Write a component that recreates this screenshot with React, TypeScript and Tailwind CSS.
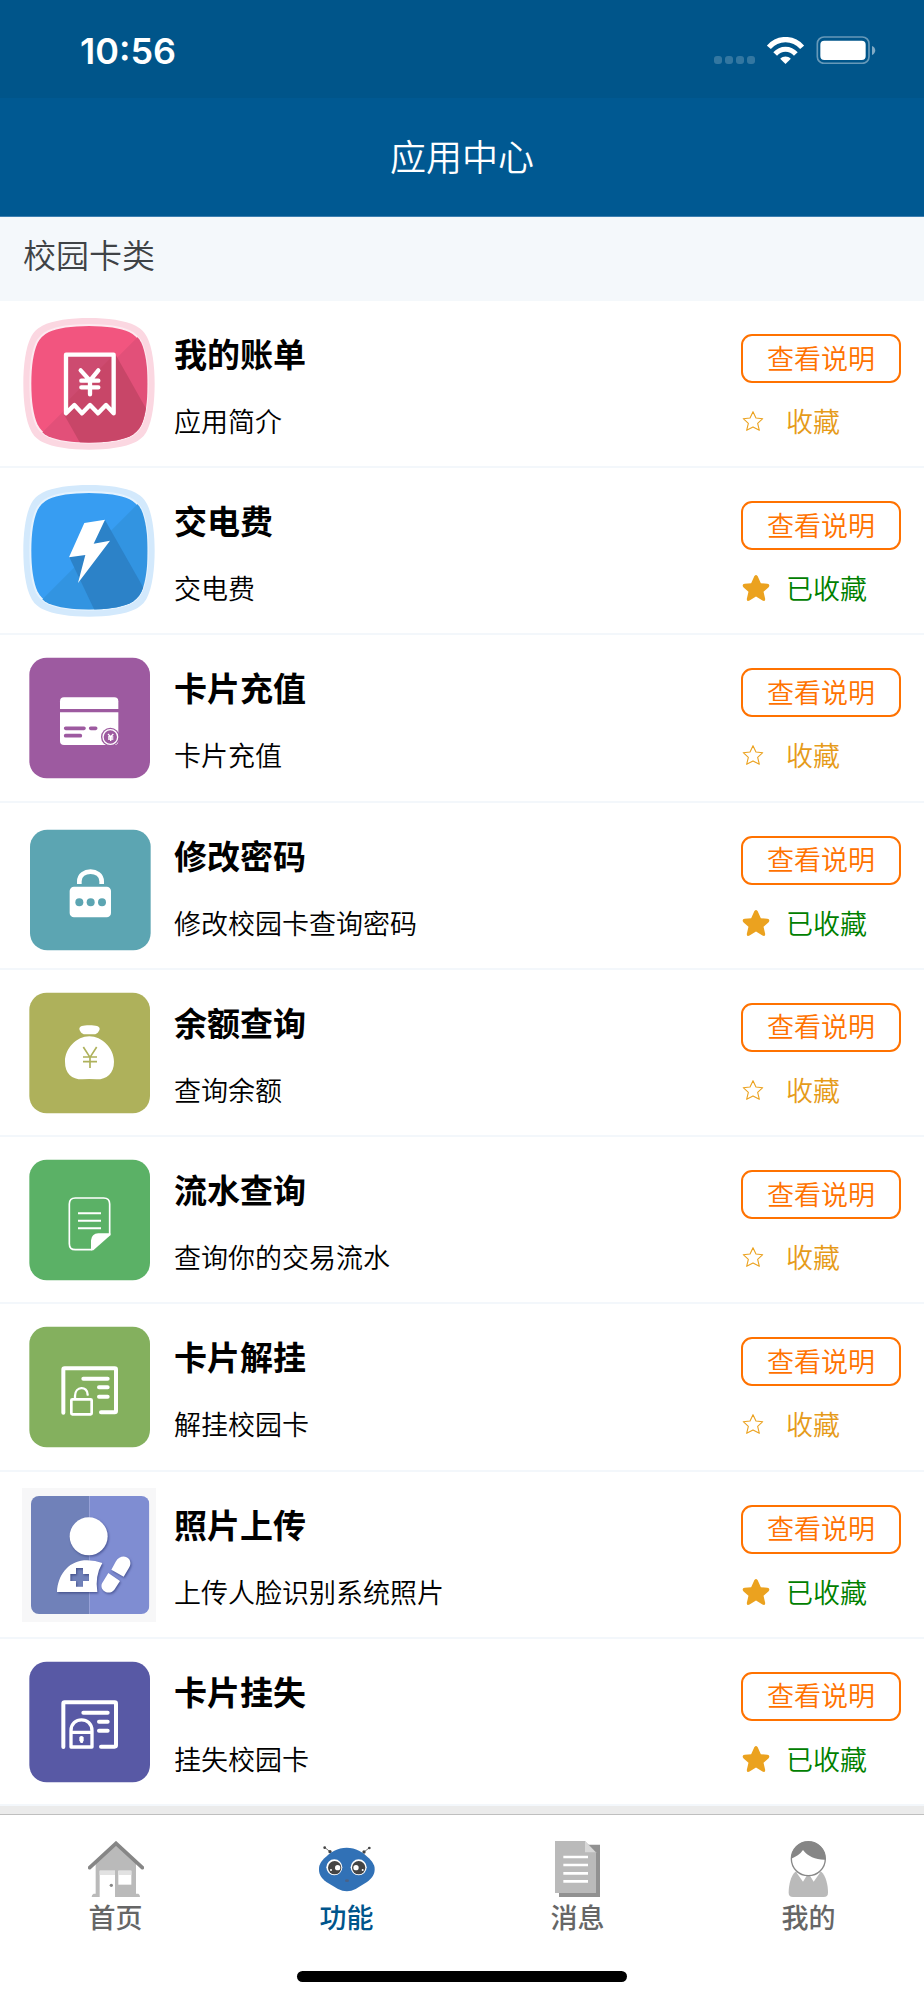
import { useState } from "react";
import type { ReactNode } from "react";

const squircle =
  "M70 249C70 195 77 140 93 109C101 93 111 84 127 75C158 59 213 52 267 52C321 52 376 59 407 75C423 84 433 93 441 109C457 140 464 195 464 249C464 304 457 359 441 390C433 406 423 415 407 424C376 440 321 447 267 447C213 447 158 440 127 424C111 415 101 406 93 390C77 359 70 304 70 249Z";
const squircleInner =
  "M91 249C91 200 97 155 110 126C117 112 130 99 144 92C173 79 218 73 267 73C316 73 361 79 390 92C404 99 417 112 424 126C437 155 443 200 443 249C443 299 437 344 424 373C417 387 404 400 390 407C361 420 316 426 267 426C218 426 173 420 144 407C130 400 117 387 110 373C97 344 91 299 91 249Z";

function BillIcon() {
  return (
    <svg viewBox="66 49 402 402" className="h-full w-full" fill="none">
      <clipPath id="bill-clip">
        <path d={squircleInner} />
      </clipPath>
      <path d={squircle} fill="#fbd7e1" />
      <path d={squircleInner} fill="#f2557f" stroke="#fdeaf0" strokeWidth="6" />
      <g clipPath="url(#bill-clip)">
        <path d="M440 82L110 412V460H460V82Z" fill="#e25079" />
        <path d="M197 162H347L470 380V460H259L193 343Z" fill="#c84668" />
        <path d="M197 162H342L197 307Z" fill="#cd4b70" />
      </g>
      <path
        d="M198 338V162H341V338L318 313L294 338L270 313L246 338L223 313Z"
        stroke="#fff"
        strokeWidth="13"
        strokeLinejoin="round"
      />
      <path
        d="M242 209L270 240L295 209M270 240V281M244 240H295M244 260H295"
        stroke="#fff"
        strokeWidth="13"
        strokeLinecap="round"
        strokeLinejoin="round"
      />
    </svg>
  );
}

function PowerIcon() {
  return (
    <svg viewBox="66 49 402 402" className="h-full w-full">
      <clipPath id="power-clip">
        <path d={squircleInner} />
      </clipPath>
      <path d={squircle} fill="#d3e9fc" />
      <path d={squircleInner} fill="#379df2" stroke="#e6f3fe" strokeWidth="6" />
      <g clipPath="url(#power-clip)">
        <path d="M440 82L110 412V460H460V82Z" fill="#3294e1" />
        <path d="M315 157L470 430V460H299L208 269Z" fill="#2c82c8" />
      </g>
      <path d="M253 166L315 156L281 228L330 219L234 346L256 262L207 269Z" fill="#fff" />
    </svg>
  );
}

function RechargeIcon() {
  return (
    <svg viewBox="66 33 402 402" className="h-full w-full" fill="none">
      <rect x="88" y="53" width="362" height="362" rx="52" fill="#9d5aa0" />
      <path d="M180 207V184Q180 172 192 172H343Q355 172 355 184V207Z" fill="#fff" />
      <path d="M180 217H355V303Q355 315 343 315H192Q180 315 180 303Z" fill="#fff" />
      <path
        d="M197 265H252M272 265H287M197 287H241"
        stroke="#9d5aa0"
        strokeWidth="11"
        strokeLinecap="round"
      />
      <circle cx="331" cy="291" r="28" fill="#9d5aa0" />
      <circle cx="331" cy="291" r="22" stroke="#fff" strokeWidth="4" />
      <path
        d="M324 282L332 290L340 282M332 290V303M324 291H340M324 297H340"
        stroke="#fff"
        strokeWidth="4"
      />
    </svg>
  );
}

function PasswordIcon() {
  return (
    <svg viewBox="66 535 402 402" className="h-full w-full" fill="none">
      <rect x="90" y="567" width="362" height="362" rx="52" fill="#5ca5b2" />
      <path d="M238 730V722C238 683 305 683 305 722V730" stroke="#fff" strokeWidth="14" />
      <rect x="209" y="738" width="124" height="92" rx="13" fill="#fff" />
      <g fill="#5ca5b2">
        <circle cx="238" cy="785" r="12" />
        <circle cx="272" cy="785" r="12" />
        <circle cx="306" cy="785" r="12" />
      </g>
    </svg>
  );
}

function BalanceIcon() {
  return (
    <svg viewBox="66 47 402 402" className="h-full w-full" fill="none">
      <rect x="88" y="67" width="362" height="362" rx="52" fill="#aeb15b" />
      <path
        d="M238 176C238 168 248 165 268 165S299 168 299 176C297 184 291 192 283 192H254C246 192 240 184 238 176Z"
        fill="#fff"
      />
      <path
        d="M268 198C306 198 342 234 342 274C342 310 320 327 290 327L268 326L247 327C215 327 195 310 195 274C195 234 230 198 268 198Z"
        fill="#fff"
      />
      <path
        d="M250 230L270 261L290 230M270 261V293M249 260H291M249 274H291"
        stroke="#aeb15b"
        strokeWidth="5"
      />
    </svg>
  );
}

function RecordIcon() {
  return (
    <svg viewBox="66 550 402 402" className="h-full w-full" fill="none">
      <rect x="88" y="570" width="362" height="362" rx="52" fill="#5bb166" />
      <path
        d="M329 797V703Q329 685 311 685H226Q208 685 208 703V822Q208 840 226 840H277"
        stroke="#fff"
        strokeWidth="5"
      />
      <path d="M273 842V812Q275 792 295 791H331V797L280 842Z" fill="#fff" />
      <path d="M234 731H303M234 753H303M234 776H303" stroke="#fff" strokeWidth="6" />
    </svg>
  );
}

function UnlockCardIcon() {
  return (
    <svg viewBox="66 62 402 402" className="h-full w-full" fill="none">
      <rect x="88" y="82" width="362" height="362" rx="52" fill="#84b05e" />
      <g stroke="#fff" strokeLinecap="round" strokeLinejoin="round">
        <path d="M190 340V211Q190 207 194 207H344Q348 207 348 211V335Q348 339 344 339H303" strokeWidth="12" />
        <path d="M250 238H323M297 264H323M297 292H323" strokeWidth="12" />
        <rect x="214" y="300" width="61" height="45" rx="3" strokeWidth="8" />
        <path d="M225 299V290C225 259 263 259 263 286" strokeWidth="7" />
      </g>
    </svg>
  );
}

function PhotoIcon() {
  return (
    <svg viewBox="66 564 402 402" className="h-full w-full">
      <clipPath id="photo-clip">
        <rect x="93" y="588" width="355" height="354" rx="24" />
      </clipPath>
      <rect x="66" y="564" width="402" height="402" fill="#f7f7f8" />
      <g clipPath="url(#photo-clip)">
        <rect x="93" y="588" width="175" height="354" fill="#7081b9" />
        <rect x="268" y="588" width="180" height="354" fill="#7f8dd2" />
      </g>
      <g className="drop-shadow-[3px_4px_3px_rgba(40,50,110,0.6)]" fill="#fff">
        <circle cx="266" cy="709" r="57" />
        <path
          d="M171 876C173 828 202 786 252 781Q282 779 307 789Q284 828 292 876ZM228 804V822H211V843H228V860H249V843H267V822H249V804Z"
          fillRule="evenodd"
        />
        <path d="M334 809L347 785C358 766 378 766 387 777C394 787 391 797 387 803L371 830Z" />
        <path d="M325 819L360 843L343 869C334 880 321 880 311 872C302 863 303 853 309 845Z" />
      </g>
    </svg>
  );
}

function LostCardIcon() {
  return (
    <svg viewBox="66 76 402 402" className="h-full w-full" fill="none">
      <rect x="88" y="96" width="362" height="362" rx="52" fill="#5859a5" />
      <g stroke="#fff" strokeLinecap="round" strokeLinejoin="round">
        <path d="M190 352V222Q190 218 194 218H344Q348 218 348 222V347Q348 351 344 351H303" strokeWidth="12" />
        <path d="M250 249H323M297 276H323M297 303H323" strokeWidth="12" />
        <path d="M213 352V303C213 260 276 260 276 303V352ZM213 308H276" strokeWidth="10" />
      </g>
      <path d="M238 323Q244 315 251 323V332L248 340H242L238 332Z" fill="#fff" />
    </svg>
  );
}

function HomeIcon() {
  return (
    <svg viewBox="264 153 168 168" className="h-14 w-14" fill="none">
      <path d="M348 164L408 219V311H415Q420 313 420 321H275Q275 313 281 311H287V219Z" fill="#bababa" />
      <rect x="299" y="242" width="46" height="79" fill="#fff" />
      <rect x="355" y="242" width="39" height="42" fill="#fff" />
      <path d="M299 242H345V255H299ZM355 242H394V255H355Z" fill="#e2e2e2" />
      <circle cx="334" cy="286" r="5" fill="#888" />
      <path d="M269 233L348 160L427 233" stroke="#868686" strokeWidth="11" strokeLinecap="round" />
    </svg>
  );
}

function RobotIcon() {
  return (
    <svg viewBox="956 153 168 168" className="h-14 w-14" fill="none">
      <path d="M974 173L989 185M1106 174L1091 186" stroke="#777" strokeWidth="3" />
      <g fill="#444">
        <circle cx="973" cy="173" r="4" />
        <circle cx="989" cy="185" r="5" />
        <circle cx="1107" cy="174" r="4" />
        <circle cx="1091" cy="186" r="5" />
      </g>
      <path
        d="M1039 173C1066 173 1088 186 1106 205C1120 220 1123 228 1123 238C1123 250 1119 262 1100 276L1066 297Q1040 311 1013 297L978 276C959 262 956 250 956 238C956 228 958 220 972 205C990 186 1012 173 1039 173Z"
        fill="#3171b6"
      />
      <circle cx="1002" cy="232" r="24" fill="#fff" />
      <circle cx="1075" cy="232" r="24" fill="#fff" />
      <circle cx="1003" cy="233" r="20" fill="#444" />
      <circle cx="1075" cy="233" r="20" fill="#444" />
      <g fill="#fff">
        <circle cx="1012" cy="233" r="8" />
        <circle cx="1067" cy="233" r="8" />
        <circle cx="992" cy="240" r="3" />
        <circle cx="1087" cy="240" r="3" />
      </g>
      <ellipse cx="1040" cy="272" rx="6" ry="4" fill="#4a6288" />
    </svg>
  );
}

function MessageIcon() {
  return (
    <svg viewBox="264 153 168 168" className="h-14 w-14" fill="none">
      <path d="M291 164H414V321H291Z" fill="#919191" />
      <path d="M279 153H369L402 187V309H279Z" fill="#bababa" />
      <path d="M369 154L401 187H369Z" fill="#d8d8d8" />
      <path d="M304 201H378M304 225H378M304 250H378M304 274H378" stroke="#fff" strokeWidth="8" />
    </svg>
  );
}

function MineIcon() {
  return (
    <svg viewBox="957 153 168 168" className="h-14 w-14">
      <path
        d="M1000 245C986 258 980 285 980 308Q980 321 993 321H1085Q1098 321 1098 308C1098 285 1092 258 1078 245Z"
        fill="#bababa"
      />
      <path d="M1003 247L1023 275L1034 257ZM1075 247L1055 275L1044 257Z" fill="#fff" />
      <circle cx="1039" cy="206" r="51" fill="#fff" stroke="#888" strokeWidth="4" />
      <path
        d="M988 206C990 137 1090 137 1091 209C1062 210 1038 200 1023 180C1014 193 1002 200 988 206Z"
        fill="#868686"
      />
    </svg>
  );
}

const starPath =
  "M13 1C14 1 14.500 2 15 3L17.500 8.500L23.500 9C25.500 9.200 26 11 24.500 12.500L20 16.500L21.500 23C21.700 25 20.500 25.500 19 24.600L13 21L7 24.600C5.500 25.500 4.300 25 4.500 23L6 16.500L1.500 12.500C0 11 .5 9.200 2.500 9L8.500 8.500L11 3C11.500 2 12 1 13 1Z";
const starOutlinePath =
  "M13 2L16.500 9.500L24.500 10.300L18.500 15.700L20.500 24L13 20L5.500 24L7.500 15.700L1.500 10.300L9.500 9.500Z";

function Star({ filled }: { filled: boolean }) {
  return (
    <svg
      viewBox="0 0 26 26"
      className={filled ? "h-7 w-7" : "h-[22px] w-[22px]"}
      fill={filled ? "#eba21f" : "none"}
      stroke={filled ? "none" : "#eba21f"}
      strokeWidth="1.3"
      strokeLinejoin="round"
    >
      <path d={filled ? starPath : starOutlinePath} />
    </svg>
  );
}

interface AppItem {
  name: string;
  desc: string;
  favorite: boolean;
  icon: ReactNode;
}

const apps: AppItem[] = [
  { name: "我的账单", desc: "应用简介", favorite: false, icon: <BillIcon /> },
  { name: "交电费", desc: "交电费", favorite: true, icon: <PowerIcon /> },
  { name: "卡片充值", desc: "卡片充值", favorite: false, icon: <RechargeIcon /> },
  { name: "修改密码", desc: "修改校园卡查询密码", favorite: true, icon: <PasswordIcon /> },
  { name: "余额查询", desc: "查询余额", favorite: false, icon: <BalanceIcon /> },
  { name: "流水查询", desc: "查询你的交易流水", favorite: false, icon: <RecordIcon /> },
  { name: "卡片解挂", desc: "解挂校园卡", favorite: false, icon: <UnlockCardIcon /> },
  { name: "照片上传", desc: "上传人脸识别系统照片", favorite: true, icon: <PhotoIcon /> },
  { name: "卡片挂失", desc: "挂失校园卡", favorite: true, icon: <LostCardIcon /> },
];

const tabs = [
  { label: "首页", icon: <HomeIcon /> },
  { label: "功能", icon: <RobotIcon /> },
  { label: "消息", icon: <MessageIcon /> },
  { label: "我的", icon: <MineIcon /> },
];

function StatusBar() {
  return (
    <div className="flex h-[98px] items-center justify-between bg-[#00558a] pt-1 pr-[48px] pl-[80px] text-white">
      <span className="font-['Inter'] text-[36px] leading-[40px] font-semibold">10:56</span>
      <div className="flex items-center gap-3 pb-[2px]">
        <div className="mt-[19px] flex gap-[3px]">
          {[0, 1, 2, 3].map((i) => (
            <span key={i} className="h-2 w-2 rounded-[3px] bg-white/20" />
          ))}
        </div>
        <svg viewBox="917 109 110 81" className="h-[27px] w-[37px]" fill="none">
          <path d="M922 140C949 109 995 109 1022 140" stroke="#fff" strokeWidth="16" />
          <path d="M941 160C958 141 986 141 1003 160" stroke="#fff" strokeWidth="15" />
          <path d="M956 174C965 165 979 165 988 174L972 190Z" fill="#fff" />
        </svg>
        <svg viewBox="1064 108 178 84" className="h-[28px] w-[60px]" fill="none">
          <rect x="1067" y="111" width="155" height="79" rx="20" stroke="#fff" strokeOpacity="0.4" strokeWidth="5" />
          <rect x="1076" y="122" width="136" height="58" rx="12" fill="#fff" />
          <path d="M1231 138C1244 143 1244 160 1231 165Z" fill="#fff" fillOpacity="0.5" />
        </svg>
      </div>
    </div>
  );
}

function AppRow({ app, onToggle }: { app: AppItem; onToggle: () => void }) {
  return (
    <li className="flex border-b-2 border-[#f3f7fb] pr-[23px] pl-[22px]">
      <div className="mt-4 h-[134px] w-[134px] shrink-0">{app.icon}</div>
      <div className="min-w-0 flex-1 pt-8 pl-[18px]">
        <h2 className="text-[33px] leading-[40px] font-bold">{app.name}</h2>
        <p className="mt-8 text-[27px] leading-[32px]">{app.desc}</p>
      </div>
      <div className="w-40 shrink-0 pt-[33px] text-[27px] leading-[32px]">
        <button
          type="button"
          className="flex h-[49px] w-full items-center justify-center rounded-[11px] border-2 border-[#ff7200] pb-[2px] text-[#ff7200]"
        >
          查看说明
        </button>
        <button type="button" onClick={onToggle} className="mt-[22px] flex items-center">
          <span className="flex w-[45px] pl-[1px]">
            <Star filled={app.favorite} />
          </span>
          <span className={app.favorite ? "text-[#008000]" : "text-[#e69b1a]"}>
            {app.favorite ? "已收藏" : "收藏"}
          </span>
        </button>
      </div>
    </li>
  );
}

export default function App() {
  const [items, setItems] = useState(apps);
  const [active, setActive] = useState("功能");

  function toggle(name: string) {
    setItems(items.map((a) => (a.name === name ? { ...a, favorite: !a.favorite } : a)));
  }

  return (
    <div className="flex min-h-screen flex-col bg-white font-['Noto_Sans_CJK_SC',sans-serif] font-[350] text-black">
      <StatusBar />
      <header className="flex h-[119px] items-center justify-center border-b border-[#3d7fb0] bg-[#005992] pb-1">
        <h1 className="text-[36px] leading-[44px] font-[350] text-white">应用中心</h1>
      </header>
      <main className="flex flex-1 flex-col">
        <div className="h-[84px] bg-[#f4f8fb] px-[23px] pt-[17px] text-[33px] leading-[40px] text-[#3f4346]">
          校园卡类
        </div>
        <ul className="grid flex-1 auto-rows-fr">
          {items.map((app) => (
            <AppRow key={app.name} app={app} onToggle={() => toggle(app.name)} />
          ))}
        </ul>
      </main>
      <footer className="border-t-8 border-[#ebebeb]">
        <nav className="grid h-[133px] grid-cols-4 border-t border-[#bfbfbf]">
          {tabs.map((tab) => (
            <button
              key={tab.label}
              type="button"
              onClick={() => setActive(tab.label)}
              className={
                tab.label === active
                  ? "flex flex-col items-center pt-[26px] text-[#00558c]"
                  : "flex flex-col items-center pt-[26px] text-[#666]"
              }
            >
              {tab.icon}
              <span className="mt-1 text-[27px] leading-[32px] font-medium">{tab.label}</span>
            </button>
          ))}
        </nav>
        <div className="flex h-[53px] justify-center pt-[24px]">
          <div className="h-[11px] w-[330px] rounded-full bg-black" />
        </div>
      </footer>
    </div>
  );
}
